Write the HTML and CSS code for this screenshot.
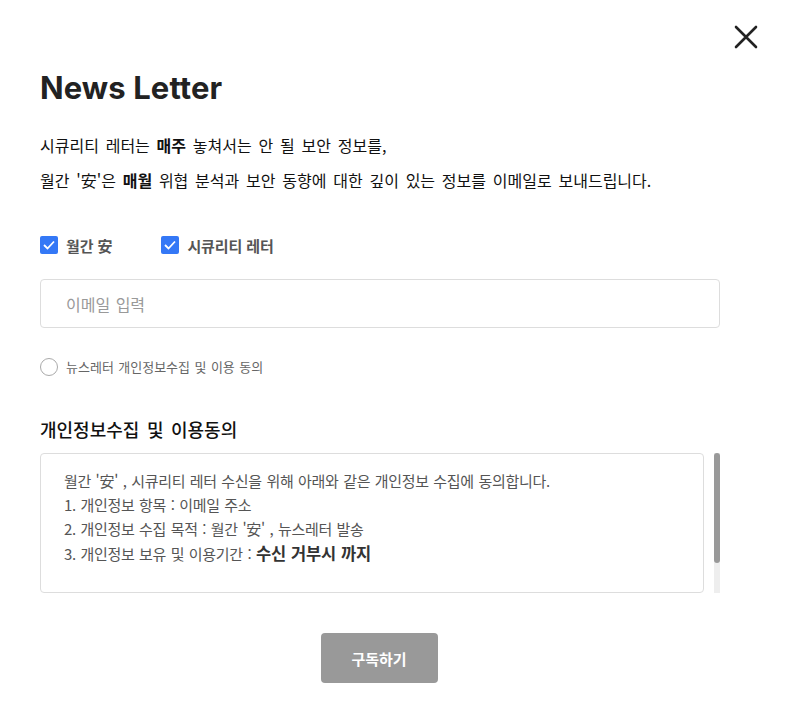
FILE: index.html
```html
<!DOCTYPE html>
<html lang="ko">
<head>
<meta charset="utf-8">
<link rel="stylesheet" href="styles.css">
</head>
<body>
<div class="modal">
  <button class="close" aria-label="닫기">
    <svg width="24" height="24" viewBox="0 0 24 24"><path d="M2 2 L22 22 M22 2 L2 22" stroke="#222" stroke-width="2.6" stroke-linecap="round" fill="none"/></svg>
  </button>
  <h1 class="title">News Letter</h1>
  <p class="desc">시큐리티 레터는 <b>매주</b> 놓쳐서는 안 될 보안 정보를,<br>월간 '安'은 <b>매월</b> 위협 분석과 보안 동향에 대한 깊이 있는 정보를 이메일로 보내드립니다.</p>
  <div class="checks">
    <label class="check"><span class="box"><svg width="12" height="10" viewBox="0 0 12 10"><path d="M1 5 L4.5 8.5 L11 1.5" stroke="#fff" stroke-width="1.8" fill="none"/></svg></span>월간 安</label>
    <label class="check"><span class="box"><svg width="12" height="10" viewBox="0 0 12 10"><path d="M1 5 L4.5 8.5 L11 1.5" stroke="#fff" stroke-width="1.8" fill="none"/></svg></span>시큐리티 레터</label>
  </div>
  <div class="input">이메일 입력</div>
  <label class="agree"><span class="radio"></span>뉴스레터 개인정보수집 및 이용 동의</label>
  <h2 class="subtitle">개인정보수집 및 이용동의</h2>
  <div class="terms-wrap">
    <div class="terms">
      월간 '安' , 시큐리티 레터 수신을 위해 아래와 같은 개인정보 수집에 동의합니다.<br>
      1. 개인정보 항목 : 이메일 주소<br>
      2. 개인정보 수집 목적 : 월간 '安' , 뉴스레터 발송<br>
      3. 개인정보 보유 및 이용기간 : <b>수신 거부시 까지</b>
    </div>
    <div class="scroll"><div class="thumb"></div></div>
  </div>
  <div class="actions"><button class="submit">구독하기</button></div>
</div>
</body>
</html>
```
FILE: styles.css
```css
html, body { margin: 0; padding: 0; background: #fff; }
body { font-family: "Noto Sans CJK KR", "Noto Sans", sans-serif; color: #111; }
.modal { position: relative; width: 788px; height: 724px; box-sizing: border-box; padding: 0 68px 0 40px; }
.close { position: absolute; top: 25px; right: 30px; width: 24px; height: 24px; padding: 0; border: 0; background: none; }
.close svg { display: block; }
.title { margin: 0; padding-top: 70px; font-family: Inter, "Noto Sans", sans-serif; font-weight: 700; font-size: 31px; line-height: 36px; color: #222; letter-spacing: 0.1px; }
.desc { margin: 22px 0 0; font-size: 16px; line-height: 35px; color: #111; letter-spacing: 0; word-spacing: 2.3px; }
.desc b { font-weight: 700; }
.checks { display: flex; gap: 49px; margin-top: 37px; height: 20px; align-items: center; }
.check { display: flex; align-items: center; gap: 8px; font-size: 15px; font-weight: 700; color: #555; letter-spacing: -0.1px; }
.box { width: 18px; height: 18px; border-radius: 2px; background: #3478f6; display: flex; align-items: center; justify-content: center; }
.input { margin-top: 24px; height: 49px; box-sizing: border-box; border: 1px solid #ddd; border-radius: 4px; padding-left: 25px; display: flex; align-items: center; font-size: 16px; color: #999; letter-spacing: 0; word-spacing: 1px; }
.agree { display: flex; align-items: center; gap: 8px; margin-top: 29px; font-size: 13px; color: #666; letter-spacing: 0; word-spacing: 0.8px; height: 19px; }
.radio { width: 16px; height: 16px; border: 1.5px solid #aaa; border-radius: 50%; }
.subtitle { margin: 40px 0 0; font-size: 18px; font-weight: 500; line-height: 26px; color: #111; letter-spacing: 0; word-spacing: 2.5px; }
.terms-wrap { display: flex; gap: 10px; margin-top: 11px; }
.terms { flex: 1; height: 140px; box-sizing: border-box; border: 1px solid #ddd; border-radius: 4px; padding: 15px 23px; font-size: 15px; line-height: 24px; color: #555; letter-spacing: -0.3px; word-spacing: 0.7px; }
.terms b { font-size: 16.5px; font-weight: 700; color: #333; letter-spacing: -0.2px; }
.scroll { width: 6px; height: 140px; background: #eee; }
.thumb { height: 110px; background: #999; border-radius: 3px; }
.actions { display: flex; justify-content: center; margin-top: 40px; padding-right: 2px; }
.submit { width: 117px; height: 50px; border: 0; border-radius: 4px; background: #999; color: #fff; font-family: "Noto Sans CJK KR", sans-serif; font-size: 15px; font-weight: 700; }
```
